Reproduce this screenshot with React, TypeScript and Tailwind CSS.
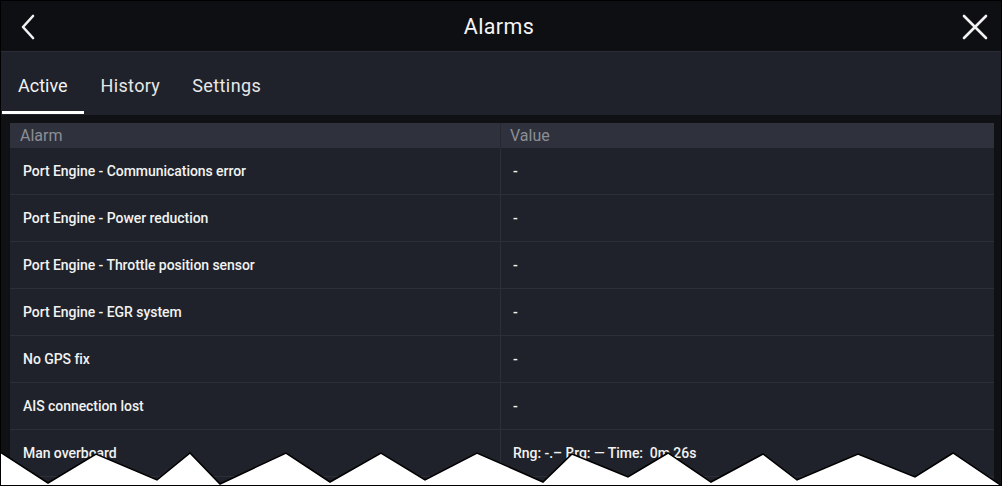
import React from "react";

const rows: [string, string][] = [
  ["Port Engine - Communications error", "-"],
  ["Port Engine - Power reduction", "-"],
  ["Port Engine - Throttle position sensor", "-"],
  ["Port Engine - EGR system", "-"],
  ["No GPS fix", "-"],
  ["AIS connection lost", "-"],
  ["Man overboard", "Rng: -.\u2013 Brg: \u2014 Time:\u00a0 0m 26s"],
  ["", ""],
];

const zig =
  "0,452 48,483 96,454 157,480 190,453 220,484 286,453 330,482 381,453 425,480 477,453 543,482 572,454 628,477 668,453 711,482 763,454 797,480 858,454 915,477 953,453 1002,486";

export default function App() {
  return (
    <div
      className="relative w-[1002px] h-[486px] overflow-hidden bg-[#101114] border border-black flex flex-col"
      style={{ fontFamily: "Roboto, 'Liberation Sans', sans-serif" }}
    >
      {/* Header */}
      <div className="h-[51px] shrink-0 bg-[#0e0f12] border-b border-[#2a2d36] flex items-center justify-between px-[18px]">
        <svg width="16" height="26" viewBox="0 0 16 26" className="ml-[1px] mt-[2px]">
          <path d="M13 2 L3 13 L13 24" fill="none" stroke="#f2f2f2" strokeWidth="2.6" strokeLinecap="round" strokeLinejoin="round" />
        </svg>
        <div className="text-[21.5px] text-[#f4f4f4] tracking-[0.35px] mt-[3px]">Alarms</div>
        <svg width="26" height="26" viewBox="0 0 26 26" className="mr-[-5px] mt-[2px]">
          <path d="M2 2 L24 24 M24 2 L2 24" fill="none" stroke="#f2f2f2" strokeWidth="2.6" strokeLinecap="round" />
        </svg>
      </div>
      {/* Tabs */}
      <div className="h-[63px] shrink-0 bg-[#1f222a] flex items-stretch pl-[1px]">
        <div className="relative px-[16px] pt-[3px] flex items-center text-[18px] text-[#f2f2f2]">
          Active
          <div className="absolute left-0 right-0 bottom-[1px] h-[3px] bg-white" />
        </div>
        <div className="pl-[17px] pr-[16px] pt-[3px] flex items-center text-[18px] tracking-[0.33px] text-[#e8e8e8]">History</div>
        <div className="px-[16px] pt-[3px] flex items-center text-[18px] tracking-[0.42px] text-[#e8e8e8]">Settings</div>
      </div>
      {/* Table */}
      <div className="flex-1 pt-[8px] pl-[9px] pr-[7px] bg-[#101114]">
        <div className="bg-[#1f222a]">
          <div className="h-[25px] bg-[#2f323d] flex text-[16px] text-[#8b8e96]">
            <div className="w-[491px] pl-[10px] flex items-center border-r border-[#262932]">Alarm</div>
            <div className="flex-1 pl-[9px] flex items-center">Value</div>
          </div>
          {rows.map(([a, v], i) => (
            <div key={i} className="h-[47px] flex border-b border-[#2c2f38] text-[14px] font-medium tracking-[-0.05px] text-[#f2f2f2]">
              <div className="w-[491px] pl-[13px] flex items-center border-r border-[#2c2f38]">{a}</div>
              <div className="flex-1 pl-[12px] flex items-center">{v}</div>
            </div>
          ))}
        </div>
      </div>
      {/* Torn edge */}
      <svg
        className="absolute left-[-1px] top-[-1px]"
        width="1002"
        height="486"
        viewBox="0 0 1002 486"
      >
        <polygon points={`${zig} 1002,486 0,486`} fill="#ffffff" />
        <polyline points={zig} fill="none" stroke="#000" strokeWidth="1.5" />
      </svg>
    </div>
  );
}
